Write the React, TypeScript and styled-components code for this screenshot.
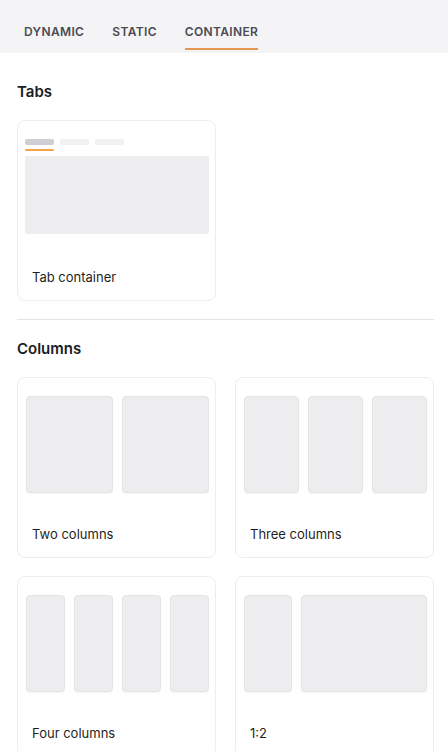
import React from "react";
import styled, { createGlobalStyle } from "styled-components";

const Global = createGlobalStyle`
  html, body { margin: 0; padding: 0; background: #ffffff; }
  body { font-family: Inter, "Noto Sans", Arial, sans-serif; -webkit-font-smoothing: antialiased; }
  * { box-sizing: border-box; }
`;

const Page = styled.div`
  width: 448px;
  min-height: 751px;
  background: #fff;
  overflow: hidden;
`;

const TabBar = styled.div`
  height: 53px;
  background: #f4f4f6;
  display: flex;
  align-items: flex-end;
  gap: 28px;
  padding: 0 24px;
`;

const Tab = styled.div<{ $active?: boolean }>`
  height: 50px;
  display: flex;
  align-items: center;
  padding-top: 14px;
  font-size: 12px;
  font-weight: 600;
  letter-spacing: 0.35px;
  color: #4a4a52;
  border-bottom: 2px solid ${(p) => (p.$active ? "#e8964f" : "transparent")};
  margin-bottom: 3px;
`;

const Content = styled.div`
  padding: 0 14px 0 17px;
`;

const Heading = styled.h2<{ $top: number }>`
  margin: 0;
  padding: ${(p) => p.$top}px 0 20px;
  font-size: 15px;
  line-height: 16px;
  font-weight: 600;
  color: #1b1b1f;
`;

const Grid = styled.div`
  display: grid;
  grid-template-columns: 1fr 1fr;
  column-gap: 19px;
  row-gap: 18px;
`;

const Card = styled.div`
  height: 181px;
  border: 1px solid #ededef;
  border-radius: 8px;
  background: #fff;
  display: flex;
  flex-direction: column;
  padding: 18px 6px 15px 8px;
`;

const Label = styled.div`
  margin-top: auto;
  padding-left: 6px;
  font-size: 13px;
  line-height: 16px;
  color: #1f1f23;
`;

const Preview = styled.div<{ $cols: string }>`
  height: 97px;
  display: grid;
  grid-template-columns: ${(p) => p.$cols};
  gap: 9px;
`;

const Block = styled.div`
  background: #ededf0;
  border: 1px solid #e4e4e7;
  border-radius: 4px;
  box-shadow: 0 1px 1px rgba(0, 0, 0, 0.04);
`;

const TabPreview = styled.div`
  display: flex;
  flex-direction: column;
  margin-left: -1px;
`;

const MiniTabs = styled.div`
  display: flex;
  gap: 6px;
  height: 13px;
`;

const MiniTab = styled.div<{ $active?: boolean }>`
  width: 29px;
  display: flex;
  flex-direction: column;
  gap: 4px;
  &::before {
    content: "";
    height: 6px;
    border-radius: 2px;
    background: ${(p) => (p.$active ? "#cfcfd3" : "#f1f1f3")};
  }
  &::after {
    content: "";
    height: 2px;
    border-radius: 1px;
    background: ${(p) => (p.$active ? "#f0a44d" : "transparent")};
  }
`;

const MiniPanel = styled.div`
  margin-top: 4px;
  height: 78px;
  background: #ededf0;
  border-radius: 2px;
`;

const Divider = styled.hr`
  margin: 18px 0 0;
  border: none;
  border-top: 1px solid #e4e4e6;
`;

const columns: { label: string; cols: string; n: number }[] = [
  { label: "Two columns", cols: "1fr 1fr", n: 2 },
  { label: "Three columns", cols: "1fr 1fr 1fr", n: 3 },
  { label: "Four columns", cols: "1fr 1fr 1fr 1fr", n: 4 },
  { label: "1:2", cols: "1fr 2.6fr", n: 2 },
];

export default function App() {
  return (
    <Page>
      <Global />
      <TabBar>
        <Tab>DYNAMIC</Tab>
        <Tab>STATIC</Tab>
        <Tab $active>CONTAINER</Tab>
      </TabBar>
      <Content>
        <Heading $top={31}>Tabs</Heading>
        <Grid>
          <Card>
            <TabPreview>
              <MiniTabs>
                <MiniTab $active />
                <MiniTab />
                <MiniTab />
              </MiniTabs>
              <MiniPanel />
            </TabPreview>
            <Label>Tab container</Label>
          </Card>
        </Grid>
        <Divider />
        <Heading $top={21}>Columns</Heading>
        <Grid>
          {columns.map((c) => (
            <Card key={c.label}>
              <Preview $cols={c.cols}>
                {Array.from({ length: c.n }).map((_, i) => (
                  <Block key={i} />
                ))}
              </Preview>
              <Label>{c.label}</Label>
            </Card>
          ))}
        </Grid>
      </Content>
    </Page>
  );
}
